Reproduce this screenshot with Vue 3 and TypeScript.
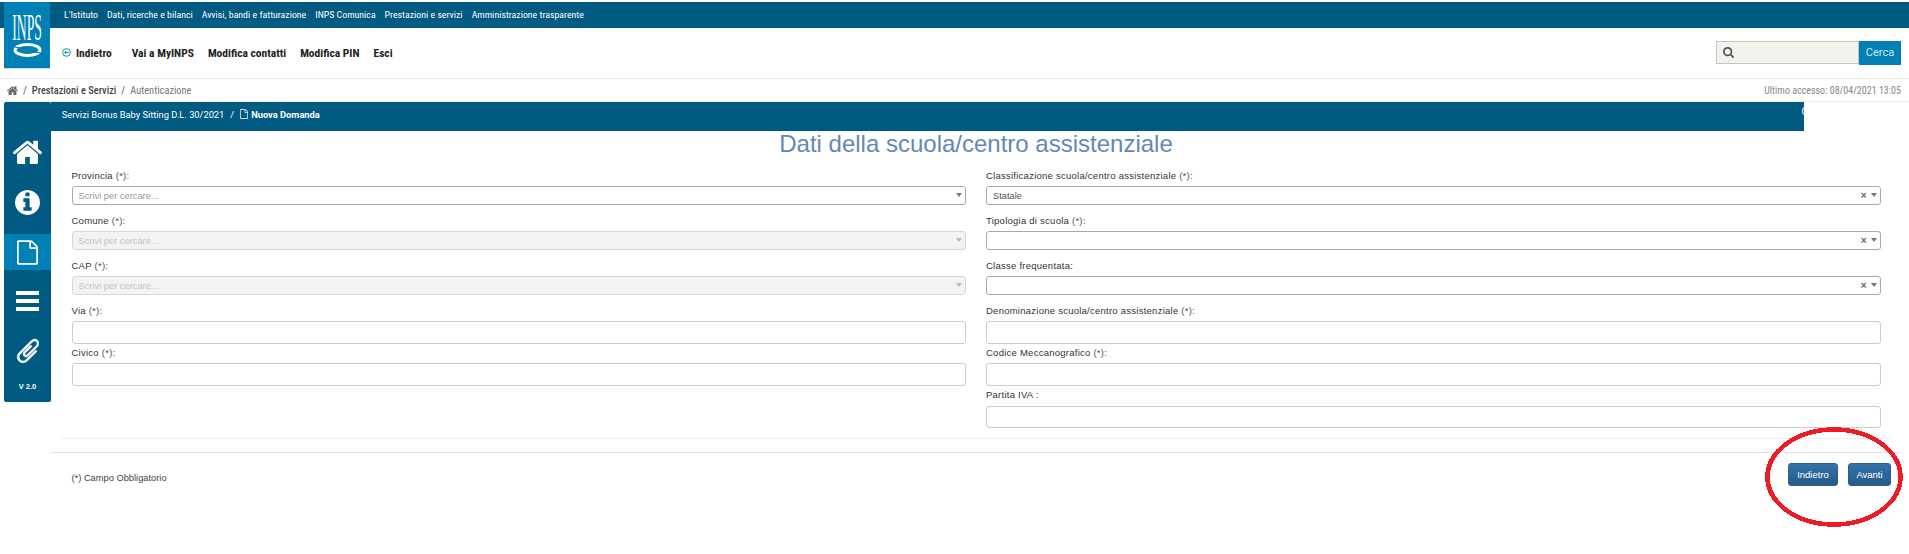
<script setup lang="ts">
interface Field { label: string; req?: string; kind: 'select' | 'disabled' | 'input' | 'clear'; value?: string }
const left: Field[] = [
  { label: 'Provincia', req: ' (*):', kind: 'select' },
  { label: 'Comune', req: ' (*):', kind: 'disabled' },
  { label: 'CAP', req: ' (*):', kind: 'disabled' },
  { label: 'Via', req: ' (*):', kind: 'input' },
  { label: 'Civico', req: ' (*):', kind: 'input' },
]
const right: Field[] = [
  { label: 'Classificazione scuola/centro assistenziale', req: ' (*):', kind: 'clear', value: 'Statale' },
  { label: 'Tipologia di scuola', req: ' (*):', kind: 'clear' },
  { label: 'Classe frequentata:', kind: 'clear' },
  { label: 'Denominazione scuola/centro assistenziale', req: ' (*):', kind: 'input' },
  { label: 'Codice Meccanografico', req: ' (*):', kind: 'input' },
  { label: 'Partita IVA :', kind: 'input' },
]
const topLinks = ["L'Istituto", 'Dati, ricerche e bilanci', 'Avvisi, bandi e fatturazione', 'INPS Comunica', 'Prestazioni e servizi', 'Amministrazione trasparente']
const navLinks = ['Vai a MyINPS', 'Modifica contatti', 'Modifica PIN', 'Esci']
const homePath = 'M1472 992v480q0 26-19 45t-45 19h-384v-384h-256v384h-384q-26 0-45-19t-19-45v-480q0-1 .5-3t.5-3l575-474 575 474q1 2 1 6zm223-69l-62 74q-8 9-21 11h-3q-13 0-21-7l-692-577-692 577q-12 8-24 7-13-2-21-11l-62-74q-8-10-7-23.5t11-21.5l719-599q32-26 76-26t76 26l244 204v-195q0-14 9-23t23-9h192q14 0 23 9t9 23v408l219 182q10 8 11 21.5t-7 23.5z'
const filePath = 'M1596 380q28 28 48 76t20 88v1152q0 40-28 68t-68 28h-1344q-40 0-68-28t-28-68v-1600q0-40 28-68t68-28h896q40 0 88 20t76 48zm-444-244v376h376q-10-29-22-41l-313-313q-12-12-41-22zm384 1528v-1024h-416q-40 0-68-28t-28-68v-416h-768v1536h1280z'
</script>

<template>
  <div class="page">
    <header class="head">
      <div class="logo">
        <span class="logo-text">INPS</span>
        <svg width="29" height="14" viewBox="0 0 29 14">
          <ellipse cx="14.5" cy="7" rx="12.500" ry="5.500" fill="none" stroke="#fff" stroke-width="3" />
          <path d="M1 4 L13 6 L10 9 M28 10 L16 8 L19 5" fill="none" stroke="#0080b4" stroke-width="1.200" />
        </svg>
      </div>
      <div class="topbar">
        <a v-for="l in topLinks" :key="l">{{ l }}</a>
      </div>
      <div class="navbar">
        <span class="back">
          <svg width="9" height="9" viewBox="0 0 10 10"><circle cx="5" cy="5" r="4.300" fill="none" stroke="#0080b4" /><path d="M7.500 5H3M4.700 3.300 3 5l1.700 1.700" fill="none" stroke="#0080b4" /></svg>
          Indietro
        </span>
        <a v-for="l in navLinks" :key="l">{{ l }}</a>
        <div class="search">
          <span class="search-box">
            <svg width="11" height="11" viewBox="64 128 1664 1664"><path d="M1216 832q0-185-131.500-316.500t-316.500-131.500-316.500 131.500-131.500 316.500 131.500 316.500 316.500 131.500 316.500-131.500 131.500-316.500zm512 832q0 52-38 90t-90 38q-54 0-90-38l-343-342q-179 124-399 124-143 0-273.500-55.500t-225-150-150-225-55.500-273.500 55.500-273.500 150-225 225-150 273.500-55.500 273.500 55.500 225 150 150 225 55.500 273.500q0 220-124 399l343 343q37 37 37 90z" fill="#555" /></svg>
          </span>
          <span class="search-btn">Cerca</span>
        </div>
      </div>
    </header>
    <div class="crumbs">
      <span class="crumb-left">
        <svg width="11" height="9" viewBox="97 220 1598 1316"><path :d="homePath" fill="#666" /></svg>
        <i>/</i><b>Prestazioni e Servizi</b><i>/</i><em>Autenticazione</em>
      </span>
      <span class="access">Ultimo accesso: 08/04/2021 13:05</span>
    </div>
    <div class="body">
      <aside class="side">
        <div class="side-item item-home">
          <svg width="29" height="24" viewBox="97 220 1598 1316"><path :d="homePath" fill="#fff" /></svg>
        </div>
        <div class="side-item item-info">
          <svg width="25" height="25" viewBox="128 128 1536 1536"><path d="M1152 1376v-160q0-14-9-23t-23-9h-96v-512q0-14-9-23t-23-9h-320q-14 0-23 9t-9 23v160q0 14 9 23t23 9h96v320h-96q-14 0-23 9t-9 23v160q0 14 9 23t23 9h448q14 0 23-9t9-23zm-128-896v-160q0-14-9-23t-23-9h-192q-14 0-23 9t-9 23v160q0 14 9 23t23 9h192q14 0 23-9t9-23zm640 416q0 209-103 385.500t-279.500 279.500-385.500 103-385.500-103-279.500-279.500-103-385.500 103-385.500 279.500-279.500 385.500-103 385.500 103 279.500 279.500 103 385.500z" fill="#fff" /></svg>
        </div>
        <div class="side-item item-doc active">
          <svg width="21" height="25" viewBox="128 0 1536 1792"><path :d="filePath" fill="#fff" /></svg>
        </div>
        <div class="side-item item-bars">
          <svg width="23" height="20" viewBox="0 0 23 20"><path d="M0 0h23v4H0zM0 8h23v4H0zM0 16h23v4H0z" fill="#fff" /></svg>
        </div>
        <div class="side-item item-clip">
          <svg width="23" height="26" viewBox="120 130 1480 1530"><g transform="translate(0 1790) scale(1 -1)"><path d="M1596 1385q0 117-79 196t-196 79q-135 0-235-100l-777-776q-113-115-113-271 0-159 110-270t269-111q158 0 273 113l605 606q10 10 10 22 0 16-30.500 46.500t-46.500 30.500q-13 0-23-10l-606-607q-79-77-181-77-106 0-179 75t-73 181q0 105 76 181l776 777q63 63 145 63 64 0 106-42t42-106q0-82-63-145l-581-581q-26-24-60-24-29 0-48 19t-19 48q0 32 25 59l410 410q10 10 10 22 0 16-31 47t-47 31q-12 0-22-10l-410-410q-63-61-63-149 0-82 57-139t139-57q88 0 149 63l581 581q100 98 100 235z" fill="#fff" stroke="#fff" stroke-width="30" /></g></svg>
        </div>
        <div class="version">V 2.0</div>
      </aside>
      <main class="main">
        <div class="svc-bar">
          <span>Servizi Bonus Baby Sitting D.L. 30/2021</span>
          <i>/</i>
          <svg width="8" height="10" viewBox="128 0 1536 1792"><path :d="filePath" fill="#fff" /></svg>
          <b>Nuova Domanda</b>
          <span class="cut">C</span>
        </div>
        <h1 class="title">Dati della scuola/centro assistenziale</h1>
        <div class="form">
          <div v-for="(col, i) in [left, right]" :key="i" class="col">
            <div v-for="f in col" :key="f.label" class="field" :class="'kind-' + f.kind">
              <label>{{ f.label }}<span v-if="f.req" class="req">{{ f.req }}</span></label>
              <div class="control">
                <span v-if="f.kind === 'select'" class="ph">Scrivi per cercare...</span>
                <span v-else-if="f.kind === 'disabled'" class="ph off">Scrivi per cercare...</span>
                <span v-else-if="f.value" class="val">{{ f.value }}</span>
                <span v-if="f.kind === 'clear'" class="x">×</span>
                <span v-if="f.kind !== 'input'" class="caret"></span>
              </div>
            </div>
          </div>
        </div>
        <div class="rule rule-a"></div>
        <div class="rule rule-b"></div>
        <div class="foot">
          <span class="note">(*) Campo Obbligatorio</span>
          <div class="btns">
            <button type="button">Indietro</button>
            <button type="button">Avanti</button>
          </div>
        </div>
        <svg class="circle" width="138" height="100" viewBox="0 0 138 100" shape-rendering="crispEdges">
          <ellipse cx="69" cy="50" rx="66.500" ry="47.500" fill="none" stroke="#ed1c24" stroke-width="4.500" />
        </svg>
      </main>
    </div>
  </div>
</template>

<style>
html, body { margin: 0; background: #fff; overflow: hidden; }
</style>
<style scoped>
.page { width: 1909px; height: 554px; position: relative; overflow: hidden; font-family: "Liberation Sans", Arial, sans-serif; color: #333; background: #fff; }
.head { position: relative; height: 76px; border-bottom: 1px solid #e9e9e1; padding-top: 2px; box-sizing: content-box; }
.logo { position: absolute; left: 4px; top: 2px; width: 46px; height: 66px; background: #0080b4; border-bottom: 1px solid #c9dbe4; display: flex; flex-direction: column; align-items: center; z-index: 2; overflow: hidden; }
.logo-text { font-family: "Liberation Serif", serif; color: #fff; font-size: 37px; line-height: 26px; height: 26px; margin-top: 13px; transform: scaleX(.37); flex: none; }
.logo svg { margin-top: 2px; flex: none; }
.topbar { height: 26px; background: #005a81; padding-left: 64px; display: flex; align-items: center; gap: 9px; font: 9.850px/1 "Roboto", sans-serif; font-stretch: condensed; }
.topbar a { color: #fff; white-space: nowrap; }
.navbar { height: 49px; padding: 0 8px 0 62px; display: flex; align-items: center; font: 700 11.500px "Roboto", sans-serif; font-stretch: condensed; color: #222; gap: 14px; }
.back { display: flex; align-items: center; gap: 5px; margin-right: 6px; }
.navbar a { white-space: nowrap; }
.search { margin-left: auto; display: flex; height: 24px; }
.search-box { width: 143px; height: 23px; box-sizing: border-box; background: #f3f3ee; border: 1px solid #c5c5c0; display: flex; align-items: center; padding-left: 6px; }
.search-btn { width: 42px; background: #0080b4; color: #d5e8f1; font: 400 11px/24px "Roboto", sans-serif; text-align: center; }
.crumbs { height: 22px; display: flex; justify-content: space-between; align-items: center; padding: 0 8px 0 7px; font: 10.400px "Roboto", sans-serif; font-stretch: condensed; color: #555; border-bottom: 1px solid #eee; }
.crumb-left { display: flex; align-items: center; gap: 5px; }
.crumb-left i { font-style: normal; }
.crumb-left b { font-weight: 500; color: #444; }
.crumb-left em { font-style: normal; color: #777; }
.access { color: #888; font-size: 10px; }
.body { display: flex; }
.side { width: 47px; height: 300px; margin-left: 4px; flex: none; background: #005a81; border-radius: 2px; color: #fff; display: flex; flex-direction: column; }
.side-item { display: flex; align-items: center; justify-content: center; width: 47px; height: 36px; flex: none; }
.item-home { margin-top: 32px; }
.item-info { margin-top: 14.500px; }
.item-doc { margin-top: 13.500px; }
.item-bars { margin-top: 13px; }
.item-clip { margin-top: 13.500px; }
.active { background: #0080b4; }
.version { font: 700 7.500px/8px "Liberation Sans", sans-serif; text-align: center; margin-top: 14px; }
.main { position: relative; width: 1858px; flex: none; }
.svc-bar { width: 1753px; height: 29px; background: #005a81; color: #fff; font: 9.300px "Roboto", sans-serif; display: flex; align-items: center; padding: 0 0 5px 10.700px; gap: 5px; box-sizing: border-box; position: relative; overflow: hidden; }
.svc-bar i { font-style: normal; margin: 0 1px; }
.svc-bar b { font-weight: 700; margin-left: -2px; }
.cut { position: absolute; right: -4px; top: 4px; font-size: 10px; }
.title { margin: 0; font: 400 24px/26px "Liberation Sans", sans-serif; color: #6488b8; text-align: center; width: 1850px; height: 26px; }
.form { display: flex; gap: 20px; padding: 11px 0 0 20.500px; }
.col { width: 894.500px; flex: none; }
.field label { display: block; font: 9.500px/12px "Liberation Sans", sans-serif; letter-spacing: .25px; color: #333; height: 12px; padding-top: 2px; }
.req { color: #555; }
.control { position: relative; height: 19px; box-sizing: border-box; border: 1px solid #aaa; border-radius: 3px; margin-top: 4px; background: #fff; display: flex; align-items: center; padding-left: 6px; font-size: 9.300px; }
.field { height: 45px; }
.kind-input { height: 42px; }
.kind-input .control { height: 23px; border-color: #ccc; }
.col:last-child .field:last-child .control { margin-top: 5px; height: 22px; }
.kind-disabled .control { background: #f3f3f3; border-color: #d8d8d8; }
.ph { color: #999; }
.ph.off { color: #c4c4c4; }
.val { color: #555; }
.x { position: absolute; right: 13px; font-size: 10px; font-weight: 700; color: #667; }
.caret { position: absolute; right: 3px; top: 6px; border: 3px solid transparent; border-top: 4px solid #777; border-bottom: 0; }
.kind-disabled .caret { border-top-color: #bbb; }
.rule { position: absolute; height: 1px; }
.rule-a { top: 336px; left: 10px; width: 1830px; background: #efefef; }
.rule-b { top: 350px; left: 0; width: 1850px; background: #e4e4e4; }
.foot { position: absolute; top: 361px; left: 20.500px; width: 1819.500px; display: flex; justify-content: space-between; align-items: center; }
.note { font: 9.300px "Liberation Sans", sans-serif; color: #444; margin-top: 6px; }
.btns { display: flex; gap: 10px; }
.btns button { height: 23px; padding: 0; border: 1px solid #2b5f8f; border-radius: 3px; background: linear-gradient(#3374ab, #265a88); color: #fff; font: 9.500px "Liberation Sans", sans-serif; }
.btns button:first-child { width: 50px; }
.btns button:last-child { width: 43px; }
.circle { position: absolute; left: 1714px; top: 325px; }
</style>
